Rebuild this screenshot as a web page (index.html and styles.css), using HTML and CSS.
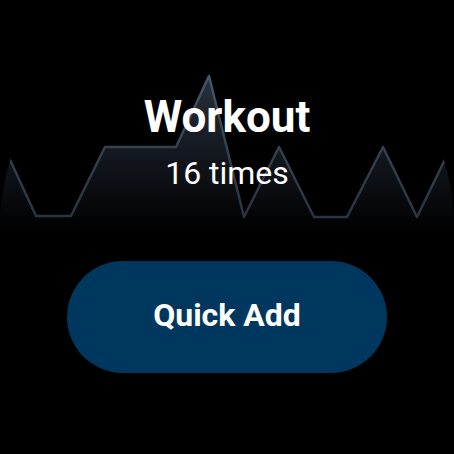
FILE: index.html
```html
<!DOCTYPE html>
<html>
<head>
<meta charset="utf-8">
<link rel="stylesheet" href="styles.css">
</head>
<body>
<div class="screen">
  <svg class="chart" width="454" height="454" viewBox="0 0 454 454">
    <defs>
      <linearGradient id="fade" gradientUnits="userSpaceOnUse" x1="0" y1="76" x2="0" y2="232">
        <stop offset="0" stop-color="#27313e"/>
        <stop offset="0.55" stop-color="#11151b"/>
        <stop offset="1" stop-color="#000000"/>
      </linearGradient>
      <linearGradient id="line" gradientUnits="userSpaceOnUse" x1="0" y1="76" x2="0" y2="218">
        <stop offset="0" stop-color="#46566b"/>
        <stop offset="0.5" stop-color="#34424f"/>
        <stop offset="1" stop-color="#2a3440"/>
      </linearGradient>
      <clipPath id="face"><circle cx="227" cy="227" r="227"/></clipPath>
    </defs>
    <g clip-path="url(#face)">
      <path d="M-25 95 L11 162 L36 216 L71 216 L105 147 L176 147 L209 76 L244 217 L279 147 L314 217 L347 217 L383 147 L417 217 L451 147 L464 170 L464 240 L-25 240 Z" fill="url(#fade)"/>
      <path d="M-25 95 L11 162 L36 216 L71 216 L105 147 L176 147 L209 76 L244 217 L279 147 L314 217 L347 217 L383 147 L417 217 L451 147 L464 170" fill="none" stroke="url(#line)" stroke-width="2.5" stroke-linejoin="round"/>
    </g>
  </svg>
  <div class="info">
    <div class="title">Workout</div>
    <div class="count">16 times</div>
  </div>
  <button class="quick">Quick Add</button>
</div>
</body>
</html>
```
FILE: styles.css
```css
html, body {
  margin: 0;
  padding: 0;
  background: #000;
}
.screen {
  position: relative;
  width: 454px;
  height: 454px;
  overflow: hidden;
  background: #000;
  display: flex;
  flex-direction: column;
  align-items: center;
  font-family: Roboto, "Liberation Sans", sans-serif;
  color: #fff;
}
.chart {
  position: absolute;
  left: 0;
  top: 0;
}
.info {
  position: relative;
  display: flex;
  flex-direction: column;
  align-items: center;
  margin-top: 91px;
}
.title {
  font-size: 44px;
  font-weight: 700;
  line-height: 52px;
}
.count {
  font-size: 32px;
  font-weight: 400;
  line-height: 38px;
  margin-top: 11px;
}
.quick {
  position: relative;
  margin-top: 69px;
  width: 320px;
  height: 112px;
  border: none;
  border-radius: 56px;
  background: #00375f;
  color: #fff;
  font-family: Roboto, "Liberation Sans", sans-serif;
  font-size: 32px;
  font-weight: 700;
  padding: 0 0 4px;
}
```
